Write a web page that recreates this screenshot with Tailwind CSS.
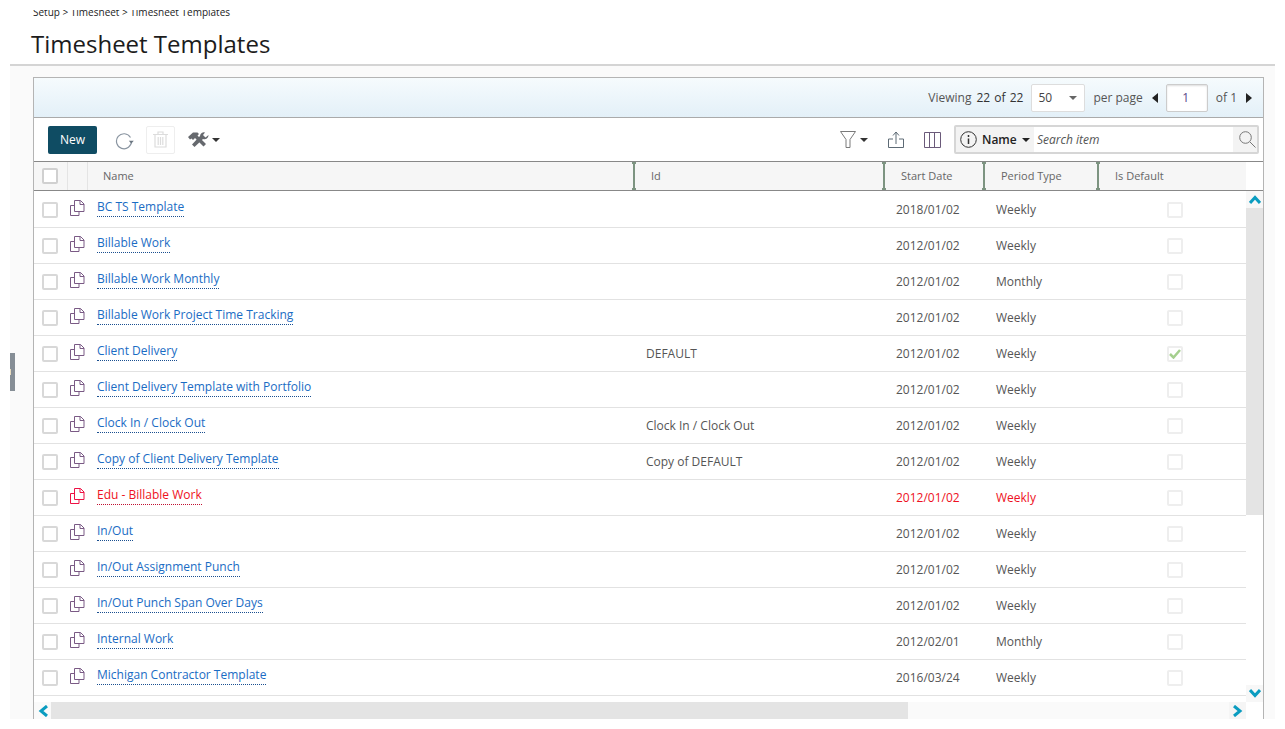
<!DOCTYPE html>
<html lang="en">
<head>
    <meta charset="UTF-8">
    <title>Timesheet Templates</title>
    <script src="https://cdn.jsdelivr.net/npm/@tailwindcss/browser@4"></script>
</head>
<body class="bg-white font-['Open_Sans',sans-serif] text-[12px] text-[#555]">
<div class="relative h-[729px] w-[1285px] overflow-hidden">
    <!-- Page header -->
    <header class="mx-[10px] h-[66px] border-b-2 border-[#d4d4d4] pl-[23px]">
        <div class="mt-0 h-[10px]"></div>
        <div class="h-[9px] overflow-hidden">
            <div class="-mt-[5px] h-[14px] text-[10px] leading-[14px] text-[#222]">Setup &gt; Timesheet &gt; Timesheet Templates</div>
        </div>
        <h1 class="-ml-[2px] mt-[9px] text-[24px] leading-[32px] text-[#1c1c1c]">Timesheet Templates</h1>
    </header>

    <!-- Side handle -->
    <div class="absolute left-[10px] top-[353px] flex h-[38px] w-[5px] items-center bg-[#868e96]">
        <span class="h-[6px] w-[1px] bg-[#e8dcc0]"></span>
    </div>

    <main class="mx-[10px] h-[653px] bg-[#fafafa] pl-[23px] pr-[11px] pt-[11px]">
        <section class="h-[642px] overflow-hidden border-x border-t border-[#b4b4b4] bg-white">
            <!-- Pager bar -->
            <div class="flex h-[40px] items-center justify-end border-b border-[#aaa] bg-gradient-to-b from-[#f6fbfd] to-[#e3f0f8] pr-[11px] text-[12px] text-[#555]">
                <span>Viewing</span>
                <span class="ml-[5px] text-[#333] [word-spacing:1px]">22 of 22</span>
                <div class="ml-[8px] flex h-[28px] w-[54px] items-center justify-between rounded-[2px] border border-[#ddd] bg-white pl-[6px] pr-[7px] text-[#444]">
                    <span>50</span>
                    <span class="h-0 w-0 border-x-[4px] border-t-[4px] border-x-transparent border-t-[#666]"></span>
                </div>
                <span class="ml-[8px]">per page</span>
                <span class="ml-[9px] h-0 w-0 border-y-[5px] border-r-[6px] border-y-transparent border-r-[#222]"></span>
                <div class="ml-[8px] flex h-[28px] w-[42px] items-center justify-center rounded-[2px] border border-[#ccc] bg-white pr-[2px] text-[#5a4a8a] shadow-[inset_0_1px_2px_#ddd]">1</div>
                <span class="ml-[8px]">of 1</span>
                <span class="ml-[9px] h-0 w-0 border-y-[5px] border-l-[6px] border-y-transparent border-l-[#222]"></span>
            </div>

            <!-- Toolbar -->
            <div class="flex h-[44px] items-center border-b border-[#888] pl-[14px] pr-[4px]">
                <button class="h-[28px] w-[49px] rounded-[2px] bg-[#0f4c63] text-[12px] font-medium text-white">New</button>
                <svg class="ml-[17px]" width="20" height="20" viewBox="0 0 20 20" fill="none" stroke="#8a95a1" stroke-width="1.2">
                    <path d="M16.500 7.500A7.500 7.500 0 1 0 17.500 11" />
                    <path d="M14.800 10.800h5l-2.500 2.600z" fill="#6a7580" stroke="none" />
                </svg>
                <div class="ml-[12px] flex h-[28px] w-[29px] items-center justify-center rounded-[2px] border border-[#eee]">
                    <svg width="15" height="17" viewBox="0 0 15 17" fill="none" stroke="#dcdcdc" stroke-width="1.2">
                        <path d="M0 3.500h15M5 3.500V1h5v2.500M2 3.500V16h11V3.500M5.200 6v8M7.500 6v8M9.800 6v8" />
                    </svg>
                </div>
                <svg class="ml-[13px]" width="21" height="15" viewBox="0 0 21 15" fill="#66696e">
                    <path d="M0 5 5 .5h4.500L11 2 9.500 3.500 18 12l-2.500 2.500L7 6 5 8 3.500 6.500 2 7.500z" />
                    <path d="M20.500 3a4 4 0 0 1-5.500 4L6.500 15 4 12.500l8-8.500A4 4 0 0 1 17 .5L15 3l2.500 2.500z" />
                </svg>
                <span class="ml-[3px] h-0 w-0 border-x-[4px] border-t-[4px] border-x-transparent border-t-[#333]"></span>

                <svg class="ml-auto" width="16" height="17" viewBox="0 0 16 17" fill="none" stroke="#7a7a7a" stroke-width="1">
                    <path d="M.5 .5h15L10 8.500v8H6v-8z" />
                </svg>
                <span class="ml-[4px] h-0 w-0 border-x-[4px] border-t-[4px] border-x-transparent border-t-[#333]"></span>
                <svg class="ml-[20px]" width="16" height="17" viewBox="0 0 16 17" fill="none" stroke="#5d6a75" stroke-width="1">
                    <path d="M5 8H.5v8.500h15V8H11M8 13V1M5 4.500 8 1l3 3.500" />
                </svg>
                <svg class="ml-[20px]" width="17" height="16" viewBox="0 0 17 16" fill="none" stroke="#6b5a7a" stroke-width="1">
                    <path d="M.5 .5h16v15H.5zM5.500 .5v15M10.500 .5v15" />
                </svg>
                <!-- Search -->
                <div class="ml-[13px] flex h-[29px] w-[305px] items-center rounded-[2px] border-2 border-[#d6d6d6] bg-white">
                    <div class="flex h-full w-[78px] items-center bg-[#f3f3f3] pl-[4px]">
                        <svg width="17" height="17" viewBox="0 0 17 17" fill="none" stroke="#333" stroke-width="1">
                            <circle cx="8.500" cy="8.500" r="7.800" />
                            <path d="M8.500 7.500v5.500M8.500 4v2" stroke-width="1.500" />
                        </svg>
                        <span class="ml-[5px] text-[12px] font-semibold text-[#222]">Name</span>
                        <span class="ml-[5px] h-0 w-0 border-x-[4px] border-t-[4px] border-x-transparent border-t-[#222]"></span>
                    </div>
                    <span class="ml-[3px] text-[12px] italic text-[#555]">Search item</span>
                    <div class="ml-auto flex h-full w-[24px] items-center justify-end bg-[#f3f3f3] pr-[1px]">
                        <svg width="17" height="17" viewBox="0 0 17 17" fill="none" stroke="#777" stroke-width="1">
                            <circle cx="6.500" cy="6.500" r="5.800" />
                            <path d="m11 11 5.500 5.500" />
                        </svg>
                    </div>
                </div>
            </div>

            <!-- Column headers -->
            <div class="flex h-[29px] border-b border-[#888] text-[11px] text-[#666]">
                <div class="flex h-full w-[1212px] items-center bg-[#f6f6f6]">
                    <div class="flex h-full w-[34px] items-center border-r border-[#e4e4e4] pl-[8px]">
                        <span class="h-[16px] w-[16px] rounded-[2px] border-2 border-[#d0d0d0] bg-white"></span>
                    </div>
                    <div class="h-full w-[20px] border-r border-[#e4e4e4]"></div>
                    <div class="flex h-full w-[545px] items-center pl-[15px]">Name</div>
                    <div class="relative flex h-full w-[250px] items-center pl-[18px]">
                        <span class="absolute bottom-0 left-0 top-0 w-[2px] bg-[#7d9481]"></span>
                        <span class="absolute -left-[1px] top-0 h-[2px] w-[4px] bg-[#7d9481]"></span>
                        <span class="absolute -left-[1px] bottom-0 h-[2px] w-[4px] bg-[#7d9481]"></span>
                        Id
                    </div>
                    <div class="relative flex h-full w-[100px] items-center pl-[18px]">
                        <span class="absolute bottom-0 left-0 top-0 w-[2px] bg-[#7d9481]"></span>
                        <span class="absolute -left-[1px] top-0 h-[2px] w-[4px] bg-[#7d9481]"></span>
                        <span class="absolute -left-[1px] bottom-0 h-[2px] w-[4px] bg-[#7d9481]"></span>
                        Start Date
                    </div>
                    <div class="relative flex h-full w-[114px] items-center pl-[18px]">
                        <span class="absolute bottom-0 left-0 top-0 w-[2px] bg-[#7d9481]"></span>
                        <span class="absolute -left-[1px] top-0 h-[2px] w-[4px] bg-[#7d9481]"></span>
                        <span class="absolute -left-[1px] bottom-0 h-[2px] w-[4px] bg-[#7d9481]"></span>
                        Period Type
                    </div>
                    <div class="relative flex h-full w-[149px] items-center pl-[18px]">
                        <span class="absolute bottom-0 left-0 top-0 w-[2px] bg-[#7d9481]"></span>
                        <span class="absolute -left-[1px] top-0 h-[2px] w-[4px] bg-[#7d9481]"></span>
                        <span class="absolute -left-[1px] bottom-0 h-[2px] w-[4px] bg-[#7d9481]"></span>
                        Is Default
                    </div>
                </div>
            </div>

            <!-- Rows + vertical scrollbar -->
            <div class="flex h-[511px]">
                <div id="rows" class="h-full w-[1212px] overflow-hidden pt-[1px]"></div>
                <div class="flex h-full w-[17px] flex-col">
                    <div class="flex h-[17px] items-center justify-center bg-[#f7f7f7]">
                        <svg width="12" height="9" viewBox="0 0 12 9" fill="none" stroke="#0a9cc0" stroke-width="3"><path d="M1 8l5-5.500L11 8" /></svg>
                    </div>
                    <div class="h-[307px] bg-[#e4e4e4]"></div>
                    <div class="flex-1"></div>
                    <div class="flex h-[17px] items-center justify-center bg-[#f7f7f7]">
                        <svg width="12" height="9" viewBox="0 0 12 9" fill="none" stroke="#0a9cc0" stroke-width="3"><path d="M1 1l5 5.500L11 1" /></svg>
                    </div>
                </div>
            </div>

            <!-- Horizontal scrollbar -->
            <div class="flex h-[18px] w-[1212px] bg-[#fafafa]">
                <div class="flex w-[17px] items-center justify-center">
                    <svg width="10" height="12" viewBox="0 0 10 12" fill="none" stroke="#0a9cc0" stroke-width="3"><path d="M9 1 3 6l6 5" /></svg>
                </div>
                <div class="w-[857px] bg-[#e4e4e4]"></div>
                <div class="flex-1"></div>
                <div class="flex w-[17px] items-center justify-center bg-[#f5f5f5]">
                    <svg width="10" height="12" viewBox="0 0 10 12" fill="none" stroke="#0a9cc0" stroke-width="3"><path d="M1 1l6 5-6 5" /></svg>
                </div>
            </div>
        </section>
    </main>
</div>

<script>
    // Timesheet template rows
    const templates = [
        {name: 'BC TS Template', id: '', date: '2018/01/02', period: 'Weekly'},
        {name: 'Billable Work', id: '', date: '2012/01/02', period: 'Weekly'},
        {name: 'Billable Work Monthly', id: '', date: '2012/01/02', period: 'Monthly'},
        {name: 'Billable Work Project Time Tracking', id: '', date: '2012/01/02', period: 'Weekly'},
        {name: 'Client Delivery', id: 'DEFAULT', date: '2012/01/02', period: 'Weekly', isDefault: true},
        {name: 'Client Delivery Template with Portfolio', id: '', date: '2012/01/02', period: 'Weekly'},
        {name: 'Clock In / Clock Out', id: 'Clock In / Clock Out', date: '2012/01/02', period: 'Weekly'},
        {name: 'Copy of Client Delivery Template', id: 'Copy of DEFAULT', date: '2012/01/02', period: 'Weekly'},
        {name: 'Edu - Billable Work', id: '', date: '2012/01/02', period: 'Weekly', red: true},
        {name: 'In/Out', id: '', date: '2012/01/02', period: 'Weekly'},
        {name: 'In/Out Assignment Punch', id: '', date: '2012/01/02', period: 'Weekly'},
        {name: 'In/Out Punch Span Over Days', id: '', date: '2012/01/02', period: 'Weekly'},
        {name: 'Internal Work', id: '', date: '2012/02/01', period: 'Monthly'},
        {name: 'Michigan Contractor Template', id: '', date: '2016/03/24', period: 'Weekly'}
    ];

    document.getElementById('rows').innerHTML = templates.map(t => {
        const icon = t.red ? '#ee1144' : '#7a5a85';
        const link = t.red ? 'text-[#ee1122] border-[#c01030]' : 'text-[#1a6cc4] border-[#1a4f90]';
        const cell = t.red ? 'text-[#ee1122]' : 'text-[#555]';
        const check = t.isDefault
            ? '<svg width="12" height="10" viewBox="0 0 12 10" fill="none" stroke="#a5cf8e" stroke-width="2.500"><path d="M1 5l3.500 3.500L11 1" /></svg>'
            : '';
        return `
            <div class="flex h-[36px] items-center border-b border-[#e2e2e2]">
                <div class="flex w-[33px] items-center pl-[8px]">
                    <span class="h-[16px] w-[16px] rounded-[2px] border-2 border-[#d8d8d8] bg-white"></span>
                </div>
                <div class="flex w-[20px] items-center pb-[3px] pl-[3px]">
                    <svg width="15" height="16" viewBox="0 0 15 16" fill="none" stroke="${icon}" stroke-width="1">
                        <path d="M4.500 5.500h-4v10h8.500v-4" />
                        <path d="M4.500 .5h6l3.500 3.500v7.500h-9.500zM10 .5v4h4" />
                    </svg>
                </div>
                <div class="w-[546px] pb-[6px] pl-[10px]">
                    <span class="border-b border-dotted pb-[1px] text-[12px] ${link}">${t.name}</span>
                </div>
                <div class="w-[250px] pl-[13px] ${cell}">${t.id}</div>
                <div class="w-[100px] pl-[13px] pt-[1px] ${cell}">${t.date}</div>
                <div class="w-[114px] pl-[13px] pt-[1px] ${cell}">${t.period}</div>
                <div class="flex w-[149px] items-center pl-[70px] pt-[1px]">
                    <span class="flex h-[16px] w-[16px] items-center justify-center rounded-[2px] border-2 border-[#eee] bg-white">${check}</span>
                </div>
            </div>`;
    }).join('');
</script>
</body>
</html>
